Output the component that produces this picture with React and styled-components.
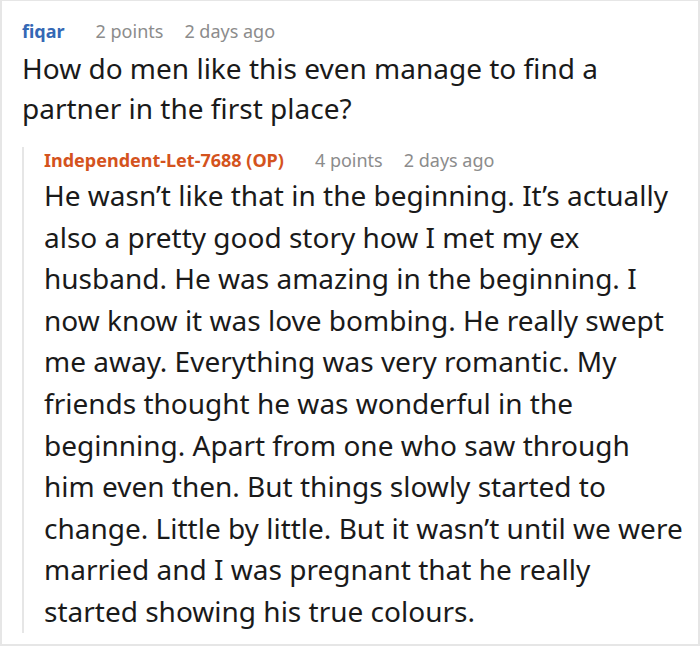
import React from "react";
import styled, { createGlobalStyle } from "styled-components";

const Global = createGlobalStyle`
  html, body { margin: 0; padding: 0; background: #fff; }
  body { font-family: "Noto Sans", sans-serif; }
`;

const Frame = styled.div`
  width: 700px;
  height: 646px;
  box-sizing: border-box;
  border: 2px solid #e6e6e6;
  border-top-width: 1px;
  padding: 17px 6px 0 20px;
  overflow: hidden;
`;

const Meta = styled.div`
  display: flex;
  align-items: baseline;
  gap: 21px;
  font-size: 18px;
  line-height: 26px;
  color: #8c8c8c;
`;

const Author = styled.span`
  font-weight: 700;
  color: ${(p) => p.$color};
  margin-right: 10px;
`;

const Body = styled.p`
  margin: ${(p) => p.$mt}px 0 0 0;
  font-size: 28px;
  line-height: ${(p) => p.$lh}px;
  color: #1a1a1a;
  white-space: nowrap;
`;

const Reply = styled.div`
  margin-top: 19px;
  border-left: 2px solid #e6e6e6;
  padding-left: 20px;
`;

const question = [
  "How do men like this even manage to find a",
  "partner in the first place?",
];

const answer = [
  "He wasn’t like that in the beginning. It’s actually",
  "also a pretty good story how I met my ex",
  "husband. He was amazing in the beginning. I",
  "now know it was love bombing. He really swept",
  "me away. Everything was very romantic. My",
  "friends thought he was wonderful in the",
  "beginning. Apart from one who saw through",
  "him even then. But things slowly started to",
  "change. Little by little. But it wasn’t until we were",
  "married and I was pregnant that he really",
  "started showing his true colours.",
];

const Lines = ({ lines }) =>
  lines.map((l, i) => (
    <React.Fragment key={i}>
      {l}
      {i < lines.length - 1 && <br />}
    </React.Fragment>
  ));

export default function App() {
  return (
    <>
      <Global />
      <Frame>
        <Meta>
          <Author $color="#3468b5">fiqar</Author>
          <span>2 points</span>
          <span>2 days ago</span>
        </Meta>
        <Body $mt={4} $lh={40}>
          <Lines lines={question} />
        </Body>
        <Reply>
          <Meta>
            <Author $color="#d4531d">Independent-Let-7688 (OP)</Author>
            <span>4 points</span>
            <span>2 days ago</span>
          </Meta>
          <Body $mt={2} $lh={41.6}>
            <Lines lines={answer} />
          </Body>
        </Reply>
      </Frame>
    </>
  );
}
